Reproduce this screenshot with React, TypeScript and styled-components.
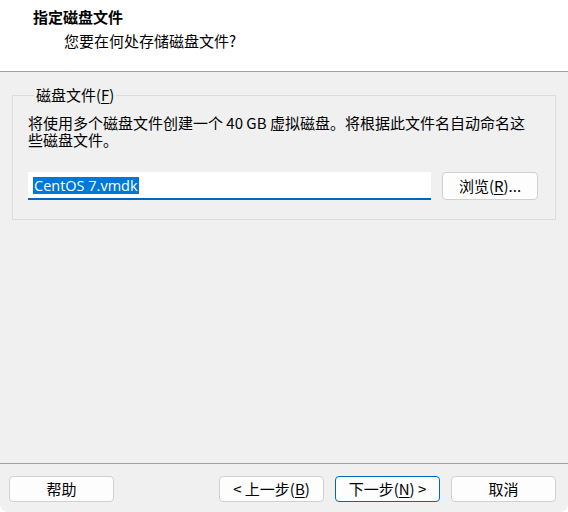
import styled, { createGlobalStyle } from "styled-components";

const GlobalStyle = createGlobalStyle`
  html, body {
    margin: 0;
    background: #ffffff;
  }

  body {
    font-family: "Noto Sans CJK SC", "Noto Sans", sans-serif;
    font-size: 15px;
    color: #000;
  }
`;

const Window = styled.div`
  display: flex;
  flex-direction: column;

  width: 568px;
  height: 512px;

  background: #f0f0f0;
  border-radius: 0 0 8px 8px;
  overflow: hidden;
`;

const Header = styled.header`
  height: 72px;

  padding: 7px 0 0 33px;
  box-sizing: border-box;

  background: #ffffff;
  border-bottom: 1px solid #a0a0a0;
`;

const Title = styled.h1`
  margin: 0;

  font-size: 15px;
  font-weight: 700;
  line-height: 20px;
`;

const Subtitle = styled.p`
  margin: 5px 0 0 31px;

  font-size: 15px;
  line-height: 18px;
`;

const Content = styled.main`
  flex: 1;

  padding: 14px 12px 0;
`;

const Group = styled.fieldset`
  margin: 0;
  padding: 10px 15px 19px;

  border: 1px solid #dcdcdc;
`;

const Legend = styled.legend`
  margin-left: 6px;
  padding: 0 2px;

  font-size: 15px;
  line-height: 18px;
`;

const Description = styled.p`
  width: 508px;
  margin: 0;

  line-height: 17px;
`;

const Row = styled.div`
  display: flex;
  align-items: flex-start;
  gap: 11px;

  margin-top: 24px;
`;

const Input = styled.div`
  display: flex;
  align-items: center;

  width: 403px;
  height: 28px;

  padding-left: 5px;
  box-sizing: border-box;

  background: #ffffff;
  border-bottom: 2px solid #0067c0;
`;

const Selected = styled.span`
  padding: 0 1px;

  background: #0078d7;
  color: #ffffff;

  font-family: "Open Sans", "Noto Sans", sans-serif;
  font-size: 14.5px;
  line-height: 17px;
`;

const Button = styled.button<{ $primary?: boolean; $width?: number; $height?: number }>`
  width: ${({ $width }) => $width ?? 105}px;
  height: ${({ $height }) => $height ?? 26}px;

  padding: 0;

  background: #fdfdfd;
  border: 1px solid ${({ $primary }) => ($primary ? "#0067c0" : "#d0d0d0")};
  border-radius: 4px;

  font-family: "Noto Sans CJK SC", "Noto Sans", sans-serif;
  font-size: 15px;
  line-height: 18px;
  color: #000;
`;

const Key = styled.u`
  text-underline-offset: 2px;
`;

const Footer = styled.footer`
  display: flex;
  gap: 11px;

  height: 49px;
  padding: 12px 12px 0 9px;
  box-sizing: border-box;

  border-top: 1px solid #a0a0a0;
`;

const Spacer = styled.div`
  flex: 1;
`;

export default function App() {
  return (
    <>
      <GlobalStyle />
      <Window>
        <Header>
          <Title>指定磁盘文件</Title>
          <Subtitle>您要在何处存储磁盘文件?</Subtitle>
        </Header>

        <Content>
          <Group>
            <Legend>
              磁盘文件(<Key>F</Key>)
            </Legend>
            <Description>
              将使用多个磁盘文件创建一个 40 GB 虚拟磁盘。将根据此文件名自动命名这些磁盘文件。
            </Description>
            <Row>
              <Input>
                <Selected>CentOS 7.vmdk</Selected>
              </Input>
              <Button $width={96} $height={28}>
                浏览(<Key>R</Key>)...
              </Button>
            </Row>
          </Group>
        </Content>

        <Footer>
          <Button>帮助</Button>
          <Spacer />
          <Button>
            &lt; 上一步(<Key>B</Key>)
          </Button>
          <Button $primary>
            下一步(<Key>N</Key>) &gt;
          </Button>
          <Button>取消</Button>
        </Footer>
      </Window>
    </>
  );
}
